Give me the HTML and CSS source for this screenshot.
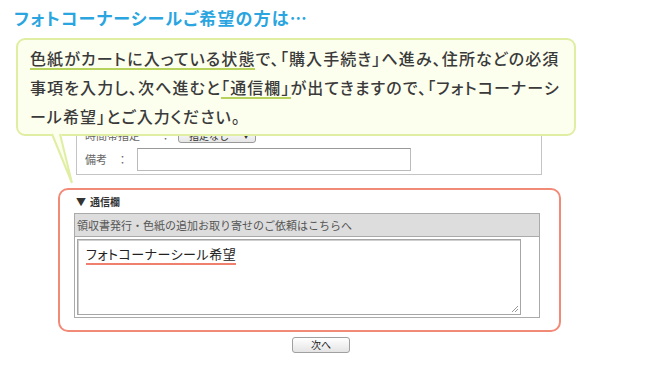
FILE: index.html
```html
<!DOCTYPE html>
<html lang="ja">
<head>
    <meta charset="UTF-8">
    <title>フォトコーナーシール</title>
    <link rel="stylesheet" href="styles.css">
</head>
<body>
<h2 class="ttl">フォトコーナーシールご希望の方は…</h2>
<div class="wrap">
    <div class="order">
        <div class="row">
            <span class="lbl">時間帯指定</span><span class="colon c1">：</span>
            <span class="sel">指定なし<i>▼</i></span>
        </div>
        <div class="row">
            <span class="lbl">備考</span><span class="colon c2">：</span>
            <span class="inp"></span>
        </div>
    </div>

    <div class="msg">
        <h3><i>▼</i>通信欄</h3>
        <div class="box">
            <div class="box-hd">領収書発行・色紙の追加お取り寄せのご依頼はこちらへ</div>
            <div class="box-bd">
                <div class="ta">
                    <span class="mark-red">フォトコーナーシール希望</span>
                    <svg class="grip" width="8" height="8" viewBox="0 0 8 8">
                        <path d="M7 1L1 7M7 4L4 7" stroke="#999" stroke-width="1"/>
                    </svg>
                </div>
            </div>
        </div>
    </div>

    <div class="btns"><span class="btn">次へ</span></div>

    <!-- 吹き出し -->
    <div class="bubble">
        <span class="mark">色紙がカートに入っている状態</span>で、「購入手続き」へ進み、住所などの必須<br>
        事項を入力し、次へ進むと<span class="mark">「通信欄」</span>が出てきますので、「フォトコーナーシ<br>
        ール希望」とご入力ください。
    </div>
    <svg class="tail" width="30" height="52" viewBox="0 0 30 52">
        <polygon points="3,0 13,0 24,50" fill="#fcfeee"/>
        <path d="M4 1L24 50M12 1L24 50" stroke="#dfeea3" stroke-width="2" fill="none"/>
    </svg>
</div>
</body>
</html>
```

FILE: styles.css
```css
*{margin:0;padding:0;box-sizing:border-box;}
body{
    width:650px;
    height:370px;
    background:#fff;
    font-family:"Noto Sans CJK JP","Noto Sans",sans-serif;
    color:#333;
    overflow:hidden;
}
.ttl{
    height:29px;
    padding:8px 0 0 14px;
    font-size:17px;
    line-height:20px;
    font-weight:bold;
    color:#2aa5df;
    font-feature-settings:"palt";
    letter-spacing:1.2px;
}
.wrap{
    position:relative;
    display:flow-root;
}

/* 注文フォーム（吹き出しの下） */
.order{
    width:466px;
    margin:94px 0 0 76px;
    padding-bottom:3px;
    border:1px solid #c4c4c4;
    border-top:none;
}
.order .row{
    display:flex;
    align-items:center;
    height:24px;
    padding-left:8px;
    font-size:11px;
    color:#666;
}
.order .c1{margin-left:20px;}
.order .c2{margin-left:10px;}
.sel{
    display:flex;
    align-items:center;
    justify-content:space-between;
    width:78px;
    height:15px;
    margin-left:7px;
    padding:0 6px 0 10px;
    border:1px solid #9a9a9a;
    border-radius:3px;
    background:linear-gradient(#fff,#e6e6e6);
    font-size:10px;
    color:#333;
}
.sel i{font-style:normal;font-size:6px;}
.inp{
    width:274px;
    height:23px;
    margin-left:9px;
    border:1px solid #bbb;
    border-top-color:#999;
    background:#fff;
}

/* 通信欄 */
.msg{
    width:503px;
    margin:13px 0 0 58px;
    padding:5px 16px 12px;
    border:2px solid #f28a78;
    border-radius:10px;
}
.msg h3{
    font-size:10px;
    line-height:13px;
    font-weight:bold;
    color:#333;
}
.msg h3 i{
    font-style:normal;
    margin-right:4px;
}
.box{
    width:466px;
    margin:5px 0 0 -2px;
    border:1px solid #aaa;
}
.box-hd{
    height:23px;
    padding-left:2px;
    border-bottom:1px solid #aaa;
    background:#dddddd;
    font-size:11px;
    line-height:22px;
    color:#555;
}
.box-bd{
    padding:2px 18px 2px 2px;
}
.ta{
    position:relative;
    height:76px;
    padding:5px 8px;
    border:1px solid #a6a6a6;
    box-shadow:inset 1px 1px 0 #cfcfcf;
    font-size:13px;
    line-height:18px;
    color:#222;
    font-feature-settings:"palt";
    letter-spacing:.5px;
}
.mark-red{
    display:inline-block;
    border-bottom:2px solid #f0806e;
    line-height:18px;
}
.grip{
    position:absolute;
    right:1px;
    bottom:1px;
}

.btns{
    padding:5px 0 0 292px;
}
.btn{
    display:block;
    width:58px;
    height:16px;
    border:1px solid #a0a0a0;
    border-radius:3px;
    background:linear-gradient(#fff,#e4e4e4);
    font-size:10px;
    line-height:14px;
    text-align:center;
    color:#222;
}

/* 吹き出し */
.bubble{
    position:absolute;
    left:16px;
    top:9px;
    width:560px;
    padding:4px 12px 3px;
    border:2px solid #dfeea3;
    border-radius:9px;
    background:#fcfeee;
    font-size:16px;
    line-height:29px;
    font-weight:500;
    color:#3a3a3a;
    font-feature-settings:"palt";
    letter-spacing:1.1px;
    white-space:nowrap;
}
.bubble .mark{
    background:linear-gradient(#b7d25c,#b7d25c) left bottom/100% 2px no-repeat;
}
.tail{
    position:absolute;
    left:48px;
    top:104px;
}
```
